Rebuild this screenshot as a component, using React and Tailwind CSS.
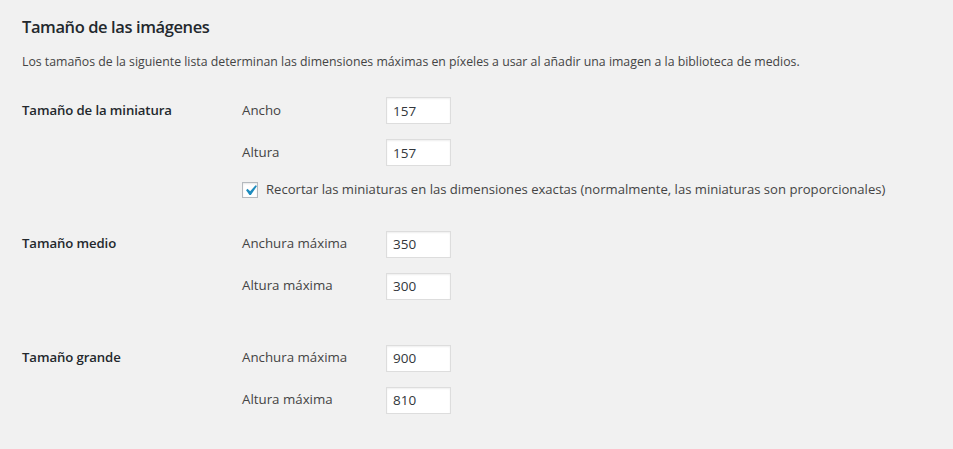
import React from 'react'

const sizes = [
  {
    title: 'Tamaño de la miniatura',
    fields: [
      { label: 'Ancho', value: '157' },
      { label: 'Altura', value: '157' }
    ],
    crop: true
  },
  {
    title: 'Tamaño medio',
    fields: [
      { label: 'Anchura máxima', value: '350' },
      { label: 'Altura máxima', value: '300' }
    ]
  },
  {
    title: 'Tamaño grande',
    fields: [
      { label: 'Anchura máxima', value: '900' },
      { label: 'Altura máxima', value: '810' }
    ]
  }
]

function SizeInput({ value }) {
  return (
    <input
      type="text"
      defaultValue={value}
      className="h-[27px] w-[65px] border border-[#dddddd] bg-white px-[6px] text-[13.5px] text-[#32373c] shadow-[inset_0_1px_2px_rgba(0,0,0,0.07)] outline-none"
    />
  )
}

function SizeRow({ size, last }) {
  return (
    <div className={`grid grid-cols-[220px_1fr] ${last ? '' : size.crop ? 'mb-[31px]' : 'mb-[45px]'}`}>
      <div className="flex h-[27px] items-center text-[13.2px] font-semibold tracking-[-0.1px] text-[#23282d]">
        {size.title}
      </div>
      <div className="flex flex-col gap-[15px]">
        {size.fields.map((f) => (
          <div key={f.label} className="grid grid-cols-[144px_65px] items-center">
            <span className="text-[13.3px] text-[#444444]">{f.label}</span>
            <SizeInput value={f.value} />
          </div>
        ))}
        {size.crop && (
          <label className="-mt-[1px] flex items-center gap-[8px] text-[13.1px] text-[#444444]">
            <span className="relative flex h-[16px] w-[16px] shrink-0 items-center justify-center border border-[#b4b9be] bg-white shadow-[inset_0_1px_2px_rgba(0,0,0,0.1)]">
              <svg viewBox="0 0 20 20" className="absolute -left-[3px] -top-[3px] h-[21px] w-[21px]">
                <path
                  d="M14.83 4.89l1.34.94-5.81 8.38H9.02L5.78 9.67l1.34-1.25 2.57 2.4z"
                  fill="#1e8cbe"
                />
              </svg>
            </span>
            Recortar las miniaturas en las dimensiones exactas (normalmente, las miniaturas son proporcionales)
          </label>
        )}
      </div>
    </div>
  )
}

export default function App() {
  return (
    <div
      className="min-h-[449px] w-full bg-[#f1f1f1] pl-[22px] pt-[14px]"
      style={{ fontFamily: '"Open Sans", "Noto Sans", sans-serif' }}
    >
      <h2 className="text-[16.5px] font-semibold leading-[26px] tracking-[-0.4px] text-[#23282d]">
        Tamaño de las imágenes
      </h2>
      <p className="mt-[13px] text-[12.3px] leading-[18px] text-[#444444]">
        Los tamaños de la siguiente lista determinan las dimensiones máximas en píxeles a usar al añadir una imagen a la biblioteca de medios.
      </p>
      <div className="mt-[26px]">
        {sizes.map((s, i) => (
          <SizeRow key={s.title} size={s} last={i === sizes.length - 1} />
        ))}
      </div>
    </div>
  )
}
